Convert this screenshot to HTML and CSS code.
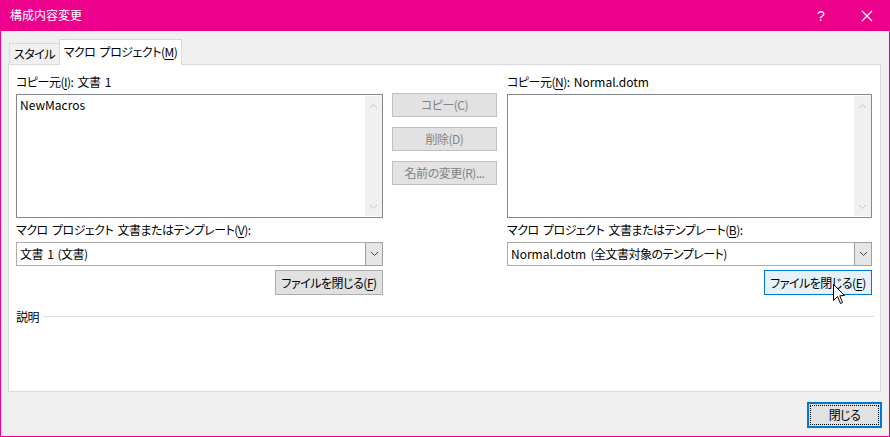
FILE: index.html
```html
<!DOCTYPE html>
<html lang="ja">
<head>
<meta charset="UTF-8">
<title>構成内容変更</title>
<link rel="stylesheet" href="styles.css">
</head>
<body>
<div class="window">
  <div class="titlebar">
    <span class="title">構成内容変更</span>
    <span class="tb-btn help">?</span>
    <span class="tb-btn close">
      <svg width="12" height="12" viewBox="0 0 12 12"><path d="M1 1 L11 11 M11 1 L1 11" stroke="#fff" stroke-width="1.2" fill="none"/></svg>
    </span>
  </div>

  <div class="tabs">
    <div class="tab">スタイル</div>
    <div class="tab active">マクロ プロジェクト(<u>M</u>)</div>
  </div>

  <div class="panel">
    <div class="columns">
      <div class="col">
        <div class="label">コピー元(<u>I</u>): 文書 1</div>
        <div class="listbox">
          <div class="items"><div class="en">NewMacros</div></div>
          <div class="scroll">
            <svg width="9" height="6" viewBox="0 0 9 6"><path d="M1 5 L4.5 1.5 L8 5" stroke="#c4c4c4" fill="none"/></svg>
            <svg width="9" height="6" viewBox="0 0 9 6"><path d="M1 1 L4.5 4.5 L8 1" stroke="#c4c4c4" fill="none"/></svg>
          </div>
        </div>
        <div class="label second">マクロ プロジェクト 文書またはテンプレート(<u>V</u>):</div>
        <div class="combo">
          <div class="value">文書 1 (文書)</div>
          <div class="drop">
            <svg width="9" height="6" viewBox="0 0 9 6"><path d="M1 1 L4.5 4.5 L8 1" stroke="#444" fill="none"/></svg>
          </div>
        </div>
        <div class="row-end">
          <div class="btn wide">ファイルを閉じる(<u>F</u>)</div>
        </div>
      </div>

      <div class="mid">
        <div class="btn disabled">コピー(C)</div>
        <div class="btn disabled">削除(D)</div>
        <div class="btn disabled">名前の変更(R)...</div>
      </div>

      <div class="col">
        <div class="label">コピー元(<u>N</u>): <span class="en">Normal.dotm</span></div>
        <div class="listbox">
          <div class="items"></div>
          <div class="scroll">
            <svg width="9" height="6" viewBox="0 0 9 6"><path d="M1 5 L4.5 1.5 L8 5" stroke="#c4c4c4" fill="none"/></svg>
            <svg width="9" height="6" viewBox="0 0 9 6"><path d="M1 1 L4.5 4.5 L8 1" stroke="#c4c4c4" fill="none"/></svg>
          </div>
        </div>
        <div class="label second">マクロ プロジェクト 文書またはテンプレート(<u>B</u>):</div>
        <div class="combo">
          <div class="value"><span class="en">Normal.dotm</span> (全文書対象のテンプレート)</div>
          <div class="drop">
            <svg width="9" height="6" viewBox="0 0 9 6"><path d="M1 1 L4.5 4.5 L8 1" stroke="#444" fill="none"/></svg>
          </div>
        </div>
        <div class="row-end">
          <div class="btn wide hover">ファイルを閉じる(<u>E</u>)
            <svg class="cursor" width="13" height="21" viewBox="0 0 13 21"><path d="M0.5 0.5 L0.5 16.5 L4.5 12.5 L7.5 19.5 L9.5 18.5 L6.8 11.8 L11.5 11.5 Z" fill="#fff" stroke="#000" stroke-width="1"/></svg>
          </div>
        </div>
      </div>
    </div>

    <div class="group">
      <span class="group-title">説明</span>
      <span class="group-line"></span>
    </div>
  </div>

  <div class="footer">
    <div class="btn default"><span class="focus">閉じる</span></div>
  </div>
</div>
</body>
</html>
```

FILE: styles.css
```css
html, body {
    margin: 0;
    padding: 0;
}
body {
    width: 890px;
    height: 437px;
    overflow: hidden;
    font-family: "Noto Sans CJK JP", "Noto Sans", sans-serif;
    font-size: 12px;
    font-feature-settings: "palt";
    letter-spacing: -0.5px;
    word-spacing: 2px;
    color: #000;
}
.en {
    letter-spacing: 0;
}
u {
    text-decoration: underline;
    text-underline-offset: 2px;
}
.window {
    box-sizing: border-box;
    width: 890px;
    height: 437px;
    border: 1px solid #ec008c;
    border-top: none;
    background: #f0f0f0;
}
.titlebar {
    height: 31px;
    background: #ec008c;
    color: #fff;
    display: flex;
    align-items: center;
    margin: 0 -1px;
    letter-spacing: 0;
}
.title {
    flex: 1;
    padding-left: 10px;
    font-size: 12px;
    line-height: 16px;
    margin-top: -1px;
}
.tb-btn {
    width: 46px;
    height: 31px;
    display: flex;
    align-items: center;
    justify-content: center;
}
.help {
    font-family: "Liberation Sans", sans-serif;
    font-size: 14px;
}
.tabs {
    display: flex;
    align-items: flex-end;
    padding-left: 8px;
    height: 33px;
    position: relative;
    z-index: 1;
}
.tab {
    box-sizing: border-box;
    height: 21px;
    line-height: 19px;
    background: #f0f0f0;
    border: 1px solid #d9d9d9;
    border-bottom: none;
    width: 51px;
    text-align: center;
    white-space: nowrap;
}
.tab.active {
    width: 123px;
    height: 26px;
    margin-left: -1px;
    margin-bottom: -1px;
    background: #fff;
    line-height: 24px;
}
.panel {
    box-sizing: border-box;
    margin: 0 8px 0 7px;
    height: 328px;
    background: #fff;
    border: 1px solid #d9d9d9;
    padding: 9px 6px 0 7px;
}
.columns {
    display: grid;
    grid-template-columns: 367px 105px 366px;
    column-gap: 9px;
}
.columns .col:last-child {
    margin-left: 1px;
}
.label {
    height: 16px;
    line-height: 16px;
    margin-bottom: 4px;
    white-space: nowrap;
}
.label.second {
    margin-top: 4px;
    margin-bottom: 4px;
}
.listbox {
    box-sizing: border-box;
    height: 124px;
    border: 1px solid #828790;
    display: flex;
}
.items {
    flex: 1;
    padding: 2px 3px;
    line-height: 16px;
}
.scroll {
    width: 17px;
    margin: 1px 0;
    background: #f0f0f0;
    display: flex;
    flex-direction: column;
    justify-content: space-between;
    align-items: center;
    padding: 7px 0 6px;
}
.combo {
    box-sizing: border-box;
    height: 24px;
    border: 1px solid #acacac;
    display: flex;
    background: #fff;
}
.value {
    flex: 1;
    padding-left: 3px;
    line-height: 22px;
    white-space: nowrap;
}
.drop {
    width: 16px;
    margin: -1px -1px -1px 0;
    background: #e5e5e5;
    border: 1px solid #a0a0a0;
    display: flex;
    align-items: center;
    justify-content: center;
}
.row-end {
    display: flex;
    justify-content: flex-end;
    margin-top: 4px;
}
.btn {
    box-sizing: border-box;
    height: 24px;
    line-height: 22px;
    border: 1px solid #adadad;
    background: #e1e1e1;
    text-align: center;
    white-space: nowrap;
}
.btn.wide {
    width: 108px;
    height: 25px;
    line-height: 23px;
    position: relative;
}
.btn.hover {
    background: #e5f1fb;
    border-color: #0078d7;
}
.cursor {
    position: absolute;
    left: 68px;
    top: 13px;
}
.mid {
    display: flex;
    flex-direction: column;
    gap: 10px;
    padding-top: 19px;
}
.btn.disabled {
    background: #e2e2e2;
    border-color: #bfbfbf;
    color: #838383;
}
.group {
    display: flex;
    align-items: center;
    margin-top: 14px;
    height: 16px;
}
.group-title {
    line-height: 16px;
    margin-right: 4px;
}
.group-line {
    flex: 1;
    border-top: 1px solid #dcdcdc;
    margin-top: -1px;
}
.footer {
    display: flex;
    justify-content: flex-end;
    padding: 10px 7px 0 0;
}
.btn.default {
    width: 75px;
    height: 26px;
    border: 2px solid #0078d7;
    padding: 1px;
    line-height: 18px;
}
.focus {
    display: block;
    height: 18px;
    border: 1px dotted #000;
    line-height: 18px;
}
```
